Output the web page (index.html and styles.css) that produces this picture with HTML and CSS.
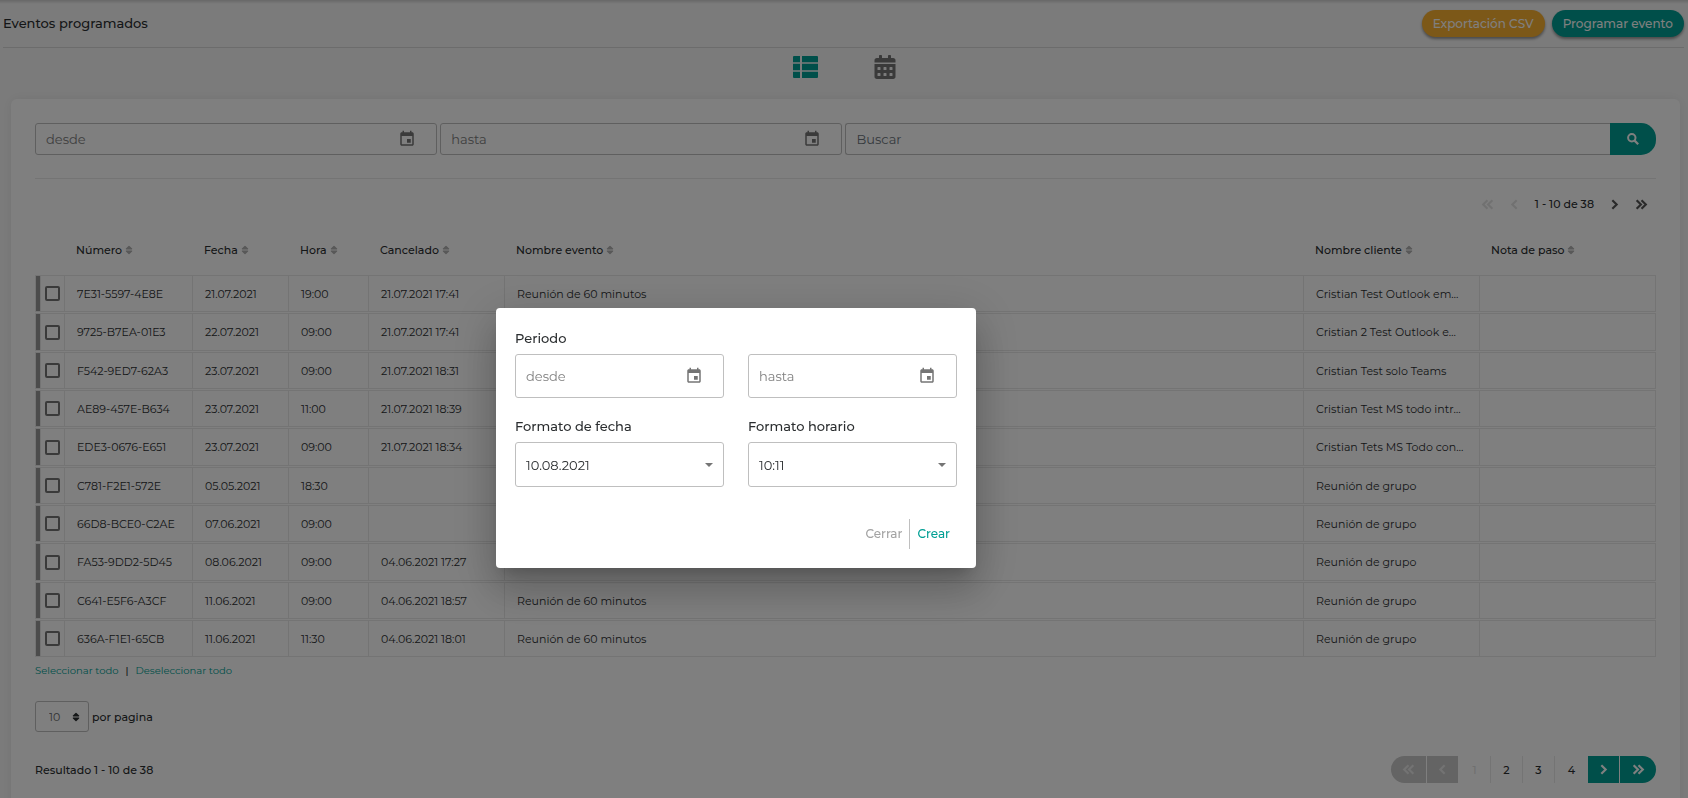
FILE: index.html
```html
<!DOCTYPE html>
<html lang="es">
<head>
<meta charset="utf-8">
<meta name="viewport" content="width=device-width, initial-scale=1">
<title>Eventos programados</title>
<link rel="stylesheet" href="styles.css">
</head>
<body>
<svg class="sprite" aria-hidden="true">
  <symbol id="i-event" viewBox="0 0 24 24"><path d="M17 12h-5v5h5v-5zM16 1v2H8V1H6v2H5c-1.11 0-1.99.9-1.99 2L3 19c0 1.1.89 2 2 2h14c1.1 0 2-.9 2-2V5c0-1.1-.9-2-2-2h-1V1h-2zm3 18H5V8h14v11z"/></symbol>
  <symbol id="i-sort" viewBox="0 0 8 10"><path d="M3.500 1q.5-.5 1 0l2.600 2.500q.6.8-.3.900H1.200q-.9-.1-.3-.9zM3.500 9q.5.5 1 0l2.600-2.500q.6-.8-.3-.9H1.200q-.9.1-.3.900z"/></symbol>
  <symbol id="i-right" viewBox="0 0 12 12"><path d="M4 2l4 4-4 4" fill="none" stroke="currentColor" stroke-width="2"/></symbol>
  <symbol id="i-left" viewBox="0 0 12 12"><path d="M8 2L4 6l4 4" fill="none" stroke="currentColor" stroke-width="2"/></symbol>
  <symbol id="i-last" viewBox="0 0 12 12"><path d="M1.500 2l4 4-4 4M6 2l4 4-4 4" fill="none" stroke="currentColor" stroke-width="2"/></symbol>
  <symbol id="i-first" viewBox="0 0 12 12"><path d="M10.500 2l-4 4 4 4M6 2L2 6l4 4" fill="none" stroke="currentColor" stroke-width="2"/></symbol>
  <symbol id="i-list" viewBox="0 0 25 22"><path d="M1 0h6v6.200H0V1q0-1 1-1zM9 0h15q1 0 1 1v5.200H9zM0 7.800h7v6.400H0zM9 7.800h16v6.400H9zM0 15.800h7V22H1q-1 0-1-1zM9 15.800h16V21q0 1-1 1H9z"/></symbol>
  <symbol id="i-calendar" viewBox="0 0 448 512"><path d="M0 464c0 26.500 21.500 48 48 48h352c26.500 0 48-21.500 48-48V192H0v272zm320-196c0-6.600 5.400-12 12-12h40c6.600 0 12 5.400 12 12v40c0 6.600-5.400 12-12 12h-40c-6.600 0-12-5.400-12-12v-40zm0 128c0-6.600 5.400-12 12-12h40c6.600 0 12 5.400 12 12v40c0 6.600-5.400 12-12 12h-40c-6.600 0-12-5.400-12-12v-40zM192 268c0-6.600 5.400-12 12-12h40c6.600 0 12 5.400 12 12v40c0 6.600-5.400 12-12 12h-40c-6.600 0-12-5.400-12-12v-40zm0 128c0-6.600 5.400-12 12-12h40c6.600 0 12 5.400 12 12v40c0 6.600-5.400 12-12 12h-40c-6.600 0-12-5.400-12-12v-40zM64 268c0-6.600 5.400-12 12-12h40c6.600 0 12 5.400 12 12v40c0 6.600-5.400 12-12 12H76c-6.600 0-12-5.400-12-12v-40zm0 128c0-6.600 5.400-12 12-12h40c6.600 0 12 5.400 12 12v40c0 6.600-5.400 12-12 12H76c-6.600 0-12-5.400-12-12v-40zM400 64h-48V16c0-8.800-7.200-16-16-16h-32c-8.800 0-16 7.200-16 16v48H160V16c0-8.800-7.200-16-16-16h-32c-8.800 0-16 7.200-16 16v48H48C21.500 64 0 85.500 0 112v48h448v-48c0-26.500-21.500-48-48-48z"/></symbol>
  <symbol id="i-search" viewBox="0 0 12 12"><circle cx="4.800" cy="4.800" r="3.700" fill="none" stroke="currentColor" stroke-width="2"/><path d="M7.600 7.600l3.600 3.600" stroke="currentColor" stroke-width="2.200"/></symbol>
  <symbol id="i-caret" viewBox="0 0 8 4"><path d="M0 0h8L4 4z"/></symbol>
</svg>

<div class="page">
  <header class="topbar">
    <h1 class="title">Eventos programados</h1>
    <div class="actions">
      <button class="pill pill-amber" type="button">Exportación CSV</button>
      <button class="pill pill-teal" type="button">Programar evento</button>
    </div>
  </header>

  <nav class="views" aria-label="Vista">
    <button class="view view-active" type="button" aria-label="Lista"><svg class="icon-list"><use href="#i-list"/></svg></button>
    <button class="view" type="button" aria-label="Calendario"><svg class="icon-calendar"><use href="#i-calendar"/></svg></button>
  </nav>

  <main class="card">
    <form class="filters">
      <div class="field">
        <input class="field-input" type="text" placeholder="desde" aria-label="desde">
        <button class="field-icon" type="button" aria-label="Elegir fecha"><svg class="icon-event"><use href="#i-event"/></svg></button>
      </div>
      <div class="field">
        <input class="field-input" type="text" placeholder="hasta" aria-label="hasta">
        <button class="field-icon" type="button" aria-label="Elegir fecha"><svg class="icon-event"><use href="#i-event"/></svg></button>
      </div>
      <div class="search">
        <input class="search-input" type="search" placeholder="Buscar" aria-label="Buscar">
        <button class="search-button" type="button" aria-label="Buscar"><svg class="icon-small"><use href="#i-search"/></svg></button>
      </div>
    </form>

    <div class="pager">
      <button class="pager-button" type="button" disabled aria-label="Primera"><svg class="icon-arrow"><use href="#i-first"/></svg></button>
      <button class="pager-button" type="button" disabled aria-label="Anterior"><svg class="icon-arrow"><use href="#i-left"/></svg></button>
      <span class="pager-text">1 - 10 de 38</span>
      <button class="pager-button" type="button" aria-label="Siguiente"><svg class="icon-arrow"><use href="#i-right"/></svg></button>
      <button class="pager-button" type="button" aria-label="Última"><svg class="icon-arrow"><use href="#i-last"/></svg></button>
    </div>

    <table class="events">
      <colgroup><col class="c-check"><col class="c-number"><col class="c-date"><col class="c-time"><col class="c-cancel"><col><col class="c-client"><col class="c-note"></colgroup>
      <thead>
        <tr><td></td><th>Número <svg class="icon-sort"><use href="#i-sort"/></svg></th><th>Fecha <svg class="icon-sort"><use href="#i-sort"/></svg></th><th>Hora <svg class="icon-sort"><use href="#i-sort"/></svg></th><th>Cancelado <svg class="icon-sort"><use href="#i-sort"/></svg></th><th>Nombre evento <svg class="icon-sort"><use href="#i-sort"/></svg></th><th>Nombre cliente <svg class="icon-sort"><use href="#i-sort"/></svg></th><th>Nota de paso <svg class="icon-sort"><use href="#i-sort"/></svg></th></tr>
      </thead>
      <tbody>
        <tr><td class="mark"><input class="check" type="checkbox" aria-label="7E31-5597-4E8E"></td><td>7E31-5597-4E8E</td><td>21.07.2021</td><td>19:00</td><td>21.07.2021 17:41</td><td>Reunión de 60 minutos</td><td>Cristian Test Outlook em…</td><td></td></tr>
        <tr><td class="mark"><input class="check" type="checkbox" aria-label="9725-B7EA-01E3"></td><td>9725-B7EA-01E3</td><td>22.07.2021</td><td>09:00</td><td>21.07.2021 17:41</td><td></td><td>Cristian 2 Test Outlook e…</td><td></td></tr>
        <tr><td class="mark"><input class="check" type="checkbox" aria-label="F542-9ED7-62A3"></td><td>F542-9ED7-62A3</td><td>23.07.2021</td><td>09:00</td><td>21.07.2021 18:31</td><td></td><td>Cristian Test solo Teams</td><td></td></tr>
        <tr><td class="mark"><input class="check" type="checkbox" aria-label="AE89-457E-B634"></td><td>AE89-457E-B634</td><td>23.07.2021</td><td>11:00</td><td>21.07.2021 18:39</td><td></td><td>Cristian Test MS todo intr…</td><td></td></tr>
        <tr><td class="mark"><input class="check" type="checkbox" aria-label="EDE3-0676-E651"></td><td>EDE3-0676-E651</td><td>23.07.2021</td><td>09:00</td><td>21.07.2021 18:34</td><td></td><td>Cristian Tets MS Todo con…</td><td></td></tr>
        <tr><td class="mark"><input class="check" type="checkbox" aria-label="C781-F2E1-572E"></td><td>C781-F2E1-572E</td><td>05.05.2021</td><td>18:30</td><td></td><td></td><td>Reunión de grupo</td><td></td></tr>
        <tr><td class="mark"><input class="check" type="checkbox" aria-label="66D8-BCE0-C2AE"></td><td>66D8-BCE0-C2AE</td><td>07.06.2021</td><td>09:00</td><td></td><td></td><td>Reunión de grupo</td><td></td></tr>
        <tr><td class="mark"><input class="check" type="checkbox" aria-label="FA53-9DD2-5D45"></td><td>FA53-9DD2-5D45</td><td>08.06.2021</td><td>09:00</td><td>04.06.2021 17:27</td><td></td><td>Reunión de grupo</td><td></td></tr>
        <tr><td class="mark"><input class="check" type="checkbox" aria-label="C641-E5F6-A3CF"></td><td>C641-E5F6-A3CF</td><td>11.06.2021</td><td>09:00</td><td>04.06.2021 18:57</td><td>Reunión de 60 minutos</td><td>Reunión de grupo</td><td></td></tr>
        <tr><td class="mark"><input class="check" type="checkbox" aria-label="636A-F1E1-65CB"></td><td>636A-F1E1-65CB</td><td>11.06.2021</td><td>11:30</td><td>04.06.2021 18:01</td><td>Reunión de 60 minutos</td><td>Reunión de grupo</td><td></td></tr>
      </tbody>
    </table>

    <div class="selection">
      <a class="link" href="#">Seleccionar todo</a><span>|</span><a class="link" href="#">Deseleccionar todo</a>
    </div>

    <div class="per-page">
      <div class="size">
        <select class="size-select" id="page-size"><option>10</option></select>
        <svg class="size-icon"><use href="#i-sort"/></svg>
      </div>
      <label for="page-size">por pagina</label>
    </div>

    <footer class="results">
      <span>Resultado 1 - 10 de 38</span>
      <div class="pages">
        <button class="page-step page-first" type="button" disabled aria-label="Primera"><svg class="icon-page"><use href="#i-first"/></svg></button>
        <button class="page-step" type="button" disabled aria-label="Anterior"><svg class="icon-page"><use href="#i-left"/></svg></button>
        <button class="page-number" type="button" disabled>1</button>
        <button class="page-number" type="button">2</button>
        <button class="page-number" type="button">3</button>
        <button class="page-number" type="button">4</button>
        <button class="page-step" type="button" aria-label="Siguiente"><svg class="icon-page"><use href="#i-right"/></svg></button>
        <button class="page-step page-last" type="button" aria-label="Última"><svg class="icon-page"><use href="#i-last"/></svg></button>
      </div>
    </footer>
  </main>
</div>

<div class="backdrop">
  <form class="dialog" role="dialog" aria-modal="true" aria-label="Exportación CSV">
    <div class="dialog-grid">
      <div class="group">
        <label class="label" for="from">Periodo</label>
        <div class="field field-tall">
          <input class="field-input" id="from" type="text" placeholder="desde">
          <button class="field-icon" type="button" aria-label="Elegir fecha"><svg class="icon-event"><use href="#i-event"/></svg></button>
        </div>
      </div>
      <div class="group group-end">
        <div class="field field-tall">
          <input class="field-input" type="text" placeholder="hasta" aria-label="hasta">
          <button class="field-icon" type="button" aria-label="Elegir fecha"><svg class="icon-event"><use href="#i-event"/></svg></button>
        </div>
      </div>
      <div class="group">
        <label class="label" for="date-format">Formato de fecha</label>
        <div class="choice">
          <select class="choice-select" id="date-format"><option>10.08.2021</option></select>
          <svg class="choice-icon"><use href="#i-caret"/></svg>
        </div>
      </div>
      <div class="group">
        <label class="label" for="time-format">Formato horario</label>
        <div class="choice">
          <select class="choice-select" id="time-format"><option>10:11</option></select>
          <svg class="choice-icon"><use href="#i-caret"/></svg>
        </div>
      </div>
    </div>
    <div class="dialog-actions">
      <button class="text-button text-muted" type="button">Cerrar</button>
      <button class="text-button text-teal" type="button">Crear</button>
    </div>
  </form>
</div>
</body>
</html>
```
FILE: styles.css
```css
:root {
  --teal: #009f94;
  --amber: #f9b030;
  --text: #2b2e30;
  --line: #e9e9e9;
}

* { box-sizing: border-box; }

body {
  margin: 0;
  font: 500 11px/16px Montserrat, Inter, "Open Sans", sans-serif;
  color: var(--text);
  background: #f7f7f7;
}

button, input, select { font: inherit; color: inherit; margin: 0; }
button { padding: 0; border: 0; background: none; cursor: pointer; }
svg { fill: currentColor; flex: none; }
.sprite { display: none; }

.page {
  height: 100vh;
  overflow: hidden;
  background: linear-gradient(#cfcfcf, #f7f7f7 4px);
}

.topbar {
  display: flex;
  align-items: center;
  justify-content: space-between;
  height: 48px;
  margin: 0 4px 0 3px;
  border-bottom: 1px solid #d9d9d9;
}
.title { margin: 0; font-size: 13px; line-height: 18px; font-weight: 500; padding-bottom: 2px; }
.actions { display: flex; gap: 7px; }
.pill {
  height: 27px;
  padding: 0 11px;
  border-radius: 14px;
  color: #fff;
  font-size: 12px;
  white-space: nowrap;
  box-shadow: 0 2px 3px rgba(0, 0, 0, .4);
}
.pill-amber { background: var(--amber); }
.pill-teal { background: var(--teal); }

.views { display: flex; justify-content: center; gap: 56px; padding: 7px 0 20px; }
.view { display: flex; align-items: center; height: 24px; color: #757575; }
.view-active { color: var(--teal); }
.icon-list { width: 25px; height: 22px; }
.icon-calendar { width: 22px; height: 24px; }

.card {
  min-height: 100vh;
  margin: 0 8px 0 11px;
  padding: 24px;
  border-radius: 6px;
  background: #fff;
  box-shadow: 0 0 12px rgba(0, 0, 0, .07);
}

.filters {
  display: grid;
  grid-template-columns: 402fr 402fr 810fr;
  gap: 3px;
  padding-bottom: 23px;
  border-bottom: 1px solid var(--line);
}
.field {
  display: flex;
  align-items: center;
  height: 32px;
  padding: 0 20px 0 10px;
  border: 1px solid #bfbfbf;
  border-radius: 3px;
}
.field-input {
  flex: 1;
  min-width: 0;
  padding: 0;
  border: 0;
  outline: 0;
  background: none;
  font-size: 13px;
  font-weight: 400;
}
.field-input::placeholder { color: #808080; opacity: 1; }
.field-icon { display: flex; color: #757575; }
.icon-event { width: 18px; height: 18px; }
.search { display: flex; height: 32px; }
.search-input {
  flex: 1;
  min-width: 0;
  padding: 0 10px;
  border: 1px solid #bfbfbf;
  border-right: 0;
  border-radius: 3px 0 0 3px;
  outline: 0;
  background: none;
  font-size: 13px;
  font-weight: 400;
  appearance: none;
}
.search-input::placeholder { color: #6c757d; opacity: 1; }
.search-button {
  display: grid;
  place-items: center;
  width: 46px;
  border-radius: 0 15px 15px 0;
  color: #fff;
  background: var(--teal);
}
.icon-small { width: 12px; height: 12px; }

.pager {
  display: flex;
  align-items: center;
  justify-content: flex-end;
  gap: 14px;
  padding: 17px 8px 0 0;
}
.pager-button { display: flex; color: #555; }
.pager-button:disabled { color: #e3e3e3; }
.icon-arrow { width: 13px; height: 13px; }

.events {
  width: 100%;
  margin-top: 16px;
  table-layout: fixed;
  border-collapse: separate;
  border-spacing: 0 1px;
}
.c-check { width: 30px; }
.c-number { width: 128px; }
.c-date { width: 96px; }
.c-time { width: 80px; }
.c-cancel { width: 136px; }
.c-client, .c-note { width: 176px; }
.events th { padding: 0 11px 4px; text-align: left; font-weight: 500; white-space: nowrap; }
.events th, .events thead td { height: 45px; }
.icon-sort { width: 8px; height: 10px; color: #b0b0b0; vertical-align: -1px; }
.events tbody td {
  height: 37px;
  padding: 0 12px;
  overflow: hidden;
  border: solid var(--line);
  border-width: 1px 1px 1px 0;
  font-weight: 400;
  text-overflow: ellipsis;
  white-space: nowrap;
}
.events tbody tr:nth-child(3n+2) td { height: 38px; }
.events tbody .mark {
  padding: 0 0 0 4px;
  border-left-width: 1px;
  text-overflow: clip;
  background: linear-gradient(90deg, #999 4px, var(--line) 4px, var(--line) 5px, transparent 5px);
}
.check {
  display: block;
  width: 15px;
  height: 15px;
  margin: 0 auto;
  border: 2px solid #757575;
  border-radius: 2px;
  appearance: none;
}

.selection { display: flex; gap: 7px; padding-top: 5px; font-size: 10px; }
.link { color: var(--teal); text-decoration: none; font-weight: 400; }

.per-page { display: flex; align-items: center; gap: 3px; margin-top: 22px; }
.size, .choice { position: relative; }
.size-select {
  display: block;
  width: 54px;
  height: 31px;
  padding: 0 13px;
  border: 1px solid #bfbfbf;
  border-radius: 3px;
  background: none;
  color: #666;
  font-weight: 400;
  appearance: none;
}
.size-icon { position: absolute; top: 11px; right: 9px; width: 8px; height: 10px; pointer-events: none; }

.results { display: flex; align-items: center; justify-content: space-between; margin-top: 24px; }
.pages { display: flex; height: 27px; }
.page-step {
  display: grid;
  place-items: center;
  width: 32px;
  border-right: 1px solid #fff;
  color: #fff;
  background: var(--teal);
}
.page-step:disabled { color: #e6e6e6; background: #c8c8c8; }
.page-first { width: 36px; border-radius: 14px 0 0 14px; }
.page-last { width: 36px; border-right: 0; border-radius: 0 14px 14px 0; }
.page-number { width: 32px; border-right: 1px solid var(--line); }
.page-number:disabled { color: #e0e0e0; }
.page-number:nth-child(6) { width: 33px; border-right: 0; }
.icon-page { width: 13px; height: 13px; }

.backdrop { position: fixed; inset: 0; background: rgba(0, 0, 0, .5); }
.dialog {
  position: absolute;
  top: 308px;
  left: 496px;
  width: 480px;
  padding: 19px;
  border-radius: 4px;
  background: #fff;
  box-shadow: 0 11px 15px -7px rgba(0, 0, 0, .2), 0 24px 38px 3px rgba(0, 0, 0, .14), 0 9px 46px 8px rgba(0, 0, 0, .12);
}
.dialog-grid { display: grid; grid-template-columns: repeat(2, minmax(0, 1fr)); gap: 17px 24px; }
.group { display: flex; flex-direction: column; gap: 6px; }
.group-end { justify-content: flex-end; }
.label { padding-top: 1px; font-size: 13px; line-height: 20px; }
.field-tall { height: 44px; }
.choice-select {
  display: block;
  width: 100%;
  height: 45px;
  padding: 0 10px;
  border: 1px solid #bfbfbf;
  border-radius: 3px;
  background: none;
  font-size: 13px;
  font-weight: 400;
  appearance: none;
}
.choice-icon { position: absolute; top: 21px; right: 11px; width: 8px; height: 4px; color: #757575; pointer-events: none; }
.dialog-actions { display: flex; justify-content: flex-end; margin-top: 32px; }
.text-button { height: 30px; padding: 0 7px; font-size: 12px; }
.text-muted { border-right: 1px solid #bfbfbf; color: #a3a3a3; }
.text-teal { color: var(--teal); }
```
